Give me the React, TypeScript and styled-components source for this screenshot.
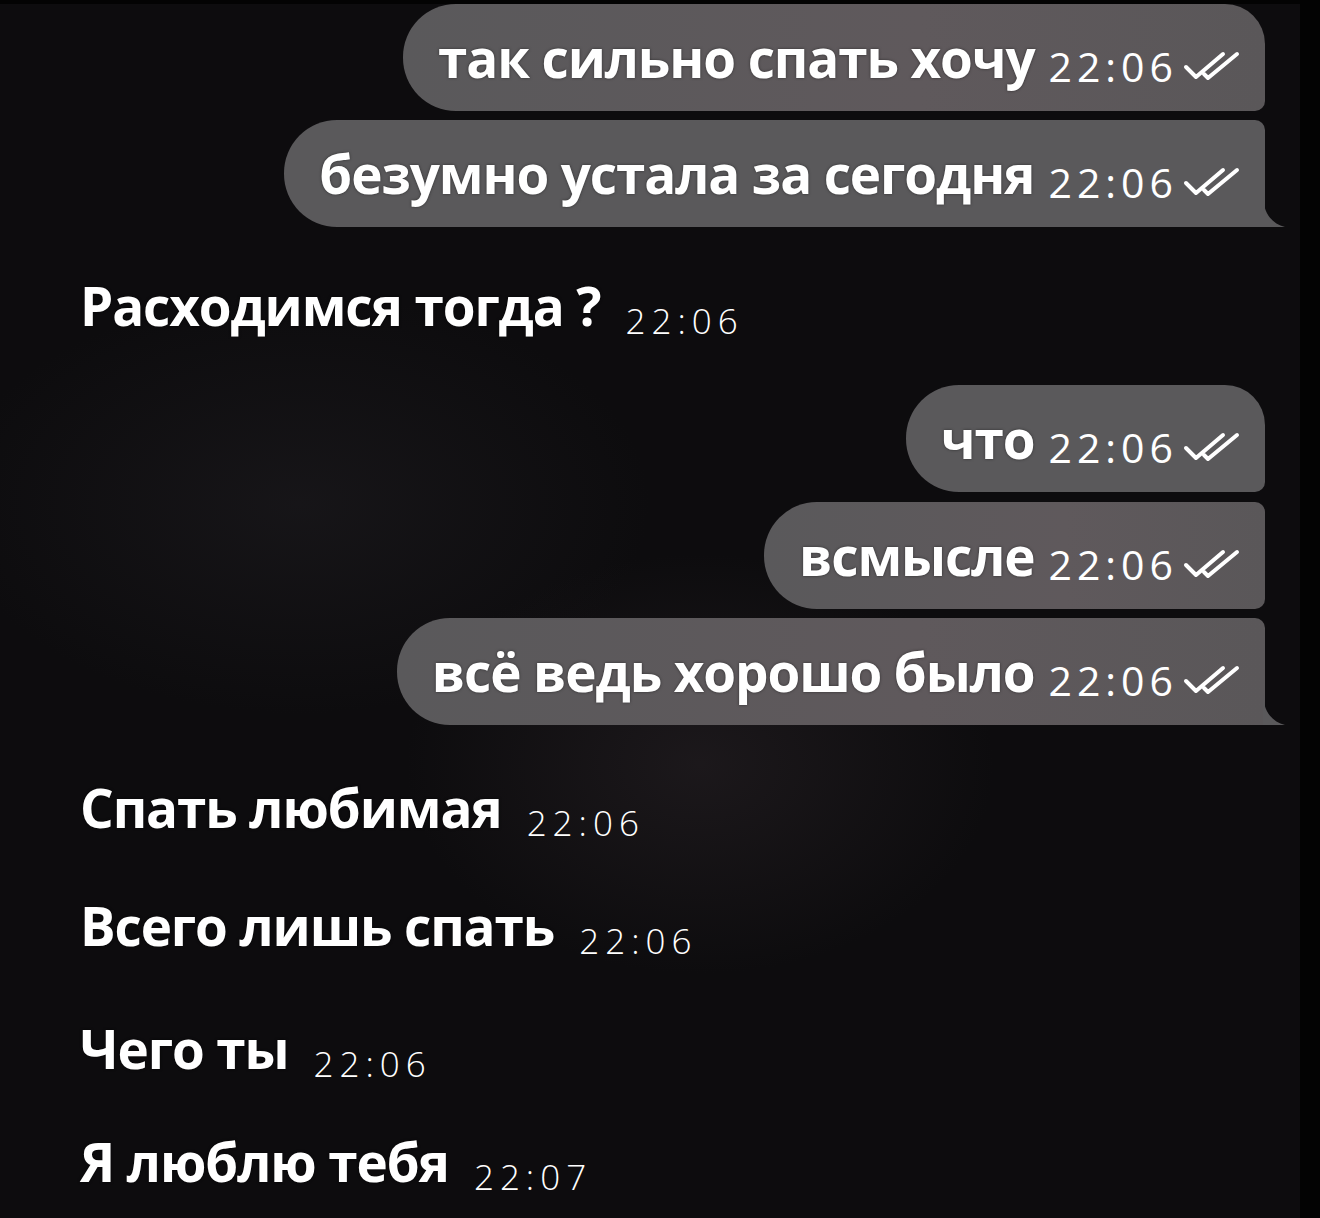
import React from "react";
import styled, { createGlobalStyle, css } from "styled-components";

const Global = createGlobalStyle`
  html, body { margin: 0; padding: 0; background: #000; }
  body { width: 1320px; height: 1218px; overflow: hidden; }
  #root { width: 1320px; height: 1218px; }
`;

const BUBBLE = "#5a595b";

const Screen = styled.div`
  width: 1320px;
  height: 1218px;
  display: flex;
  background: #030303;
  overflow: hidden;
  font-family: "Open Sans", "Noto Sans", sans-serif;
  color: #fff;
`;

const Chat = styled.div`
  width: 1300px;
  height: 1214px;
  margin-top: 4px;
  display: flex;
  flex-direction: column;
  background:
    radial-gradient(ellipse 420px 300px at 700px 760px, rgba(40, 34, 38, 0.55), transparent 70%),
    radial-gradient(ellipse 500px 300px at 300px 500px, rgba(32, 30, 34, 0.5), transparent 70%),
    #0d0c0e;
`;

const OutRow = styled.div<{ $gap: number }>`
  display: flex;
  justify-content: flex-end;
  padding-right: 35px;
  margin-top: ${(p) => p.$gap}px;
`;

type Pos = "first" | "middle" | "last" | "single";

const radii: Record<Pos, ReturnType<typeof css>> = {
  first: css`border-radius: 53px 40px 10px 53px;`,
  middle: css`border-radius: 53px 10px 10px 53px;`,
  last: css`border-radius: 53px 10px 0 53px;`,
  single: css`border-radius: 53px 40px 0 53px;`,
};

const Bubble = styled.div<{ $pos: Pos; $tint?: boolean }>`
  position: relative;
  height: 107px;
  box-sizing: border-box;
  padding: 0 24px 0 35px;
  display: flex;
  align-items: center;
  background: ${(p) =>
    p.$tint
      ? `linear-gradient(90deg, ${BUBBLE} 0%, #5f595c 60%, #5a5759 100%)`
      : BUBBLE};
  ${(p) => radii[p.$pos]}
`;

const Tail = styled.svg`
  position: absolute;
  right: -20px;
  bottom: 0;
  width: 22px;
  height: 30px;
`;

const MsgText = styled.span`
  font-size: 53px;
  font-weight: 700;
  letter-spacing: -1.1px;
  line-height: 1;
  white-space: nowrap;
  text-shadow: 0 0 3px rgba(0, 0, 0, 0.5);
`;

const BubbleTime = styled.span`
  margin-left: 14px;
  margin-right: -5px;
  margin-top: 18px;
  font-family: "Open Sans", "Noto Sans", sans-serif;
  font-size: 41px;
  font-weight: 500;
  letter-spacing: 5px;
  line-height: 1;
`;

const Checks = styled.svg`
  width: 58px;
  height: 30px;
  margin-left: 10px;
  margin-top: 16px;
`;

const InRow = styled.div<{ $gap: number }>`
  display: flex;
  align-items: baseline;
  padding-left: 80px;
  margin-top: ${(p) => p.$gap}px;
`;

const InText = styled.span`
  font-size: 53px;
  font-weight: 700;
  letter-spacing: -1.1px;
  line-height: 1;
  white-space: nowrap;
  text-shadow: 0 0 3px rgba(0, 0, 0, 0.7);
`;

const InTime = styled.span`
  margin-left: 25px;
  font-family: "Open Sans", "Noto Sans", sans-serif;
  font-size: 35px;
  font-weight: 300;
  letter-spacing: 6px;
  line-height: 1;
  position: relative;
  top: 8px;
`;

const CheckIcon = () => (
  <Checks viewBox="0 0 58 30" fill="none" stroke="#fff" strokeWidth={4} strokeLinecap="round" strokeLinejoin="round">
    <path d="M3 16 L13 26 L40 3" />
    <path d="M21 23 L25 27 L54 3" />
  </Checks>
);

const TailShape = () => (
  <Tail viewBox="0 0 22 30">
    <path d="M0 0 C1 16 8 26 22 30 L0 30 Z" fill={BUBBLE} />
  </Tail>
);

type Out = { text: string; pos: Pos; gap: number; tint?: boolean };

const OutMsg = ({ text, pos, gap, tint }: Out) => (
  <OutRow $gap={gap}>
    <Bubble $pos={pos} $tint={tint}>
      <MsgText>{text}</MsgText>
      <BubbleTime>22:06</BubbleTime>
      <CheckIcon />
      {pos === "last" && <TailShape />}
    </Bubble>
  </OutRow>
);

const InMsg = ({ text, time, gap }: { text: string; time: string; gap: number }) => (
  <InRow $gap={gap}>
    <InText>{text}</InText>
    <InTime>{time}</InTime>
  </InRow>
);

export default function App() {
  return (
    <>
      <Global />
      <Screen>
        <Chat>
          <OutMsg text="так сильно спать хочу" pos="first" gap={0} tint />
          <OutMsg text="безумно устала за сегодня" pos="last" gap={9} />
          <InMsg text="Расходимся тогда ?" time="22:06" gap={52} />
          <OutMsg text="что" pos="first" gap={53} />
          <OutMsg text="всмысле" pos="middle" gap={10} tint />
          <OutMsg text="всё ведь хорошо было" pos="last" gap={9} tint />
          <InMsg text="Спать любимая" time="22:06" gap={56} />
          <InMsg text="Всего лишь спать" time="22:06" gap={65} />
          <InMsg text="Чего ты" time="22:06" gap={70} />
          <InMsg text="Я люблю тебя" time="22:07" gap={60} />
        </Chat>
      </Screen>
    </>
  );
}
